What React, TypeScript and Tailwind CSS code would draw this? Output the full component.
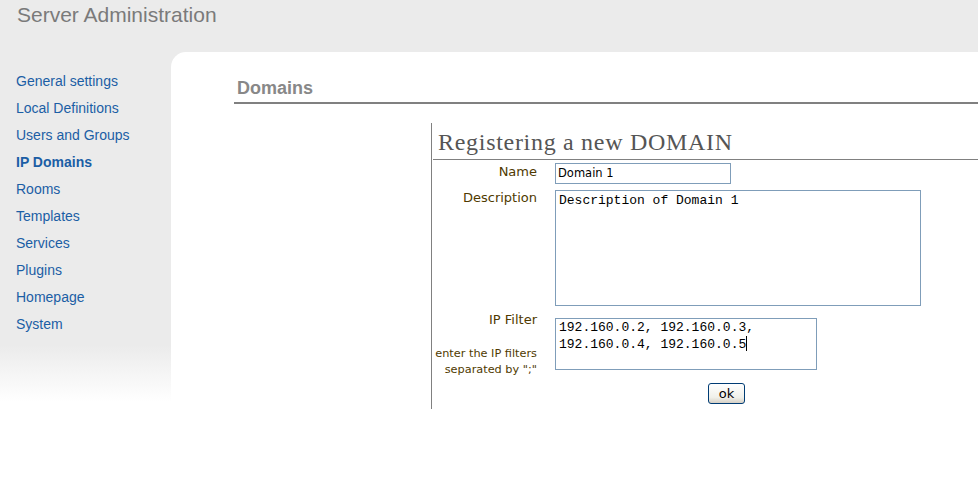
import React from "react";

const navItems = [
  "General settings",
  "Local Definitions",
  "Users and Groups",
  "IP Domains",
  "Rooms",
  "Templates",
  "Services",
  "Plugins",
  "Homepage",
  "System",
];

export default function App() {
  return (
    <div className="w-[978px] h-[479px] overflow-hidden bg-[#ebebeb] flex flex-col font-['Liberation_Sans',Arial,sans-serif]">
      <div className="h-[52px] shrink-0 pl-[17px] pt-[3px] text-[21px] leading-[24px] text-[#7a7a7a]">
        Server Administration
      </div>
      <div className="flex flex-1 min-h-0">
        <nav className="w-[171px] shrink-0 pt-[16px] pl-[16px] bg-[linear-gradient(to_bottom,#ebebeb_293px,#ffffff_350px)]">
          {navItems.map((item) => (
            <div
              key={item}
              className={
                "text-[14px] leading-[27px] text-[#1b5ea5] " +
                (item === "IP Domains" ? "font-bold" : "")
              }
            >
              {item}
            </div>
          ))}
        </nav>
        <main className="flex-1 bg-white rounded-tl-[15px] pt-[25px]">
          <div className="ml-[63px] pl-[3px] pb-[3px] border-b-2 border-[#808080] text-[18px] leading-[22px] font-bold text-[#888888]">
            Domains
          </div>
          <div className="ml-[260px] mt-[19px] border-l border-[#808080] pb-[4px] font-['DejaVu_Sans',Verdana,sans-serif]">
            <div className="ml-[1px] pl-[5px] pt-[4px] pb-[2px] border-b border-[#808080] font-['Liberation_Serif','Times_New_Roman',serif] text-[24px] leading-[30px] tracking-[0.7px] text-[#555555]">
              Registering a new DOMAIN
            </div>
            <div className="grid grid-cols-[105px_1fr] gap-x-[18px] mt-[3px]">
              {/* Name */}
              <div className="text-right text-[13px] leading-[15px] pt-[1px] text-[#4f3a00]">Name</div>
              <div>
                <div className="w-[176px] h-[21px] border border-[#7f9db9] pl-[2px] text-[11.5px] leading-[19px] text-black">
                  Domain 1
                </div>
              </div>
              {/* Description */}
              <div className="mt-[6px] text-right text-[13px] leading-[15px] text-[#4f3a00]">Description</div>
              <div className="mt-[6px]">
                <div className="w-[366px] h-[116px] border border-[#7f9db9] pl-[3px] pt-[2px] font-['Liberation_Mono','Courier_New',monospace] text-[13px] leading-[16px] text-black whitespace-pre">
                  Description of Domain 1
                </div>
              </div>
              {/* IP Filter */}
              <div className="mt-[6px] text-right text-[#4f3a00]">
                <div className="text-[13px] leading-[15px]">IP Filter</div>
                <div className="mt-[19px] text-[11.3px] leading-[16px]">
                  enter the IP filters
                  <br />
                  separated by ";"
                </div>
              </div>
              <div className="mt-[12px]">
                <div className="w-[262px] h-[52px] border border-[#7f9db9] pl-[3px] pt-[1px] font-['Liberation_Mono','Courier_New',monospace] text-[13px] leading-[16px] text-black whitespace-pre">
                  {"192.160.0.2, 192.160.0.3,\n192.160.0.4, 192.160.0.5"}
                  <span className="inline-block w-[1px] h-[15px] bg-black align-[-3px]" />
                </div>
                <div className="mt-[11px] ml-[153px]">
                  <button className="w-[37px] h-[21px] rounded-[3px] border border-[#003c74] bg-[linear-gradient(to_bottom,#ffffff,#f0f0ea_70%,#d6d0c5)] text-[13px] leading-[17px] text-black font-['DejaVu_Sans',Verdana,sans-serif]">
                    ok
                  </button>
                </div>
              </div>
            </div>
          </div>
        </main>
      </div>
    </div>
  );
}
